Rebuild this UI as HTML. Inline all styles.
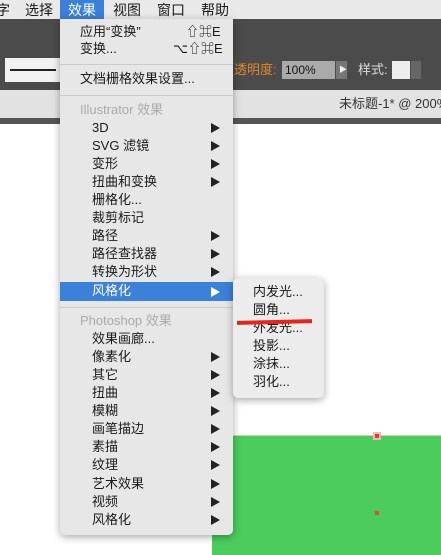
<!DOCTYPE html>
<html><head><meta charset="utf-8"><style>
*{margin:0;padding:0;box-sizing:border-box}
body{width:441px;height:555px;overflow:hidden;position:relative;background:#fff;font-family:"Liberation Sans","Noto Sans CJK SC",sans-serif;}
.a{position:absolute}
.t{position:absolute;font-size:13px;color:#1a1a1a;white-space:nowrap;line-height:16px}
.ar{position:absolute;left:211px;width:0;height:0;border-top:5px solid transparent;border-bottom:5px solid transparent;border-left:9px solid #222}
</style></head><body>
<div class="a" style="left:0;top:0;width:441px;height:19px;background:#e9e9e9"></div>
<div class="t" style="left:-4px;top:2px;font-size:14px">字</div>
<div class="t" style="left:25px;top:2px;font-size:14px">选择</div>
<div class="a" style="left:60px;top:0;width:44px;height:19px;background:#3a7fd8"></div>
<div class="t" style="left:68px;top:2px;font-size:14px;color:#fff">效果</div>
<div class="t" style="left:113px;top:2px;font-size:14px">视图</div>
<div class="t" style="left:157px;top:2px;font-size:14px">窗口</div>
<div class="t" style="left:201px;top:2px;font-size:14px">帮助</div>
<div class="a" style="left:0;top:19px;width:441px;height:71px;background:#4b4b4b"></div>
<div class="a" style="left:5px;top:58px;width:55px;height:24px;background:#f2f2f2"></div>
<div class="a" style="left:10px;top:69px;width:46px;height:2px;background:#222"></div>
<div class="t" style="left:234px;top:62px;color:#e0892a;font-size:13px">透明度:</div>
<div class="a" style="left:282px;top:61px;width:53px;height:18px;background:#aaa"></div>
<div class="t" style="left:285px;top:62px;font-size:12px;color:#111">100%</div>
<div class="a" style="left:336px;top:61px;width:11px;height:18px;background:#777"></div>
<div class="t" style="left:339px;top:62px;font-size:8px;color:#eee">▶</div>
<div class="t" style="left:358px;top:62px;color:#ddd">样式:</div>
<div class="a" style="left:392px;top:61px;width:18px;height:18px;background:#eee"></div>
<div class="a" style="left:411px;top:61px;width:10px;height:18px;background:#666"></div>
<div class="a" style="left:0;top:90px;width:441px;height:28px;background:#e2e2e2"></div>
<div class="t" style="left:339px;top:96px;color:#333">未标题-1* @ 200%</div>
<div class="a" style="left:0;top:118px;width:441px;height:6px;background:#555"></div>
<div class="a" style="left:212px;top:436px;width:229px;height:119px;background:#4bcc5d"></div>
<div class="a" style="left:212px;top:435px;width:229px;height:1px;background:#e9c9a0"></div>
<div class="a" style="left:373px;top:432px;width:8px;height:8px;background:#f1b9b0"></div>
<div class="a" style="left:375px;top:434px;width:4px;height:4px;background:#e33"></div>
<div class="a" style="left:375px;top:511px;width:4px;height:4px;background:#e04a3a"></div>

<div class="a" style="left:60px;top:19px;width:173px;height:516px;background:#e7e7e7;border-radius:0 0 5px 5px;box-shadow:0 2px 8px rgba(0,0,0,.35)"></div>
<div class="t" style="left:80px;top:24px">应用“变换”</div><div class="t" style="left:186px;top:24px">⇧⌘E</div>
<div class="t" style="left:80px;top:41px">变换...</div><div class="t" style="left:173px;top:41px">⌥⇧⌘E</div>
<div class="a" style="left:60px;top:64px;width:173px;height:1px;background:#ccc"></div>
<div class="t" style="left:80px;top:71px">文档栅格效果设置...</div>
<div class="a" style="left:60px;top:95px;width:173px;height:1px;background:#ccc"></div>
<div class="t" style="left:80px;top:102px;color:#aaa">Illustrator 效果</div>
<div class="t" style="left:92px;top:120px">3D</div><div class="ar" style="top:123px"></div>
<div class="t" style="left:92px;top:138px">SVG 滤镜</div><div class="ar" style="top:141px"></div>
<div class="t" style="left:92px;top:156px">变形</div><div class="ar" style="top:159px"></div>
<div class="t" style="left:92px;top:174px">扭曲和变换</div><div class="ar" style="top:177px"></div>
<div class="t" style="left:92px;top:192px">栅格化...</div>
<div class="t" style="left:92px;top:210px">裁剪标记</div>
<div class="t" style="left:92px;top:228px">路径</div><div class="ar" style="top:231px"></div>
<div class="t" style="left:92px;top:246px">路径查找器</div><div class="ar" style="top:249px"></div>
<div class="t" style="left:92px;top:264px">转换为形状</div><div class="ar" style="top:267px"></div>
<div class="a" style="left:60px;top:282px;width:173px;height:19px;background:#3b80d9"></div>
<div class="t" style="left:92px;top:283px;color:#fff">风格化</div><div class="ar" style="top:287px;border-left-color:#fff"></div>
<div class="a" style="left:60px;top:307px;width:173px;height:1px;background:#ccc"></div>
<div class="t" style="left:80px;top:313px;color:#aaa">Photoshop 效果</div>
<div class="t" style="left:92px;top:331px">效果画廊...</div>
<div class="t" style="left:92px;top:349px">像素化</div><div class="ar" style="top:352px"></div>
<div class="t" style="left:92px;top:367px">其它</div><div class="ar" style="top:370px"></div>
<div class="t" style="left:92px;top:385px">扭曲</div><div class="ar" style="top:388px"></div>
<div class="t" style="left:92px;top:403px">模糊</div><div class="ar" style="top:406px"></div>
<div class="t" style="left:92px;top:421px">画笔描边</div><div class="ar" style="top:424px"></div>
<div class="t" style="left:92px;top:439px">素描</div><div class="ar" style="top:442px"></div>
<div class="t" style="left:92px;top:457px">纹理</div><div class="ar" style="top:460px"></div>
<div class="t" style="left:92px;top:476px">艺术效果</div><div class="ar" style="top:479px"></div>
<div class="t" style="left:92px;top:494px">视频</div><div class="ar" style="top:497px"></div>
<div class="t" style="left:92px;top:512px">风格化</div><div class="ar" style="top:515px"></div>

<div class="a" style="left:233px;top:278px;width:91px;height:120px;background:#ececec;border-radius:5px;box-shadow:0 2px 8px rgba(0,0,0,.35)"></div>
<div class="t" style="left:253px;top:284px">内发光...</div>
<div class="t" style="left:253px;top:302px">圆角...</div>
<div class="t" style="left:253px;top:320px">外发光...</div>
<div class="t" style="left:253px;top:338px">投影...</div>
<div class="t" style="left:253px;top:356px">涂抹...</div>
<div class="t" style="left:253px;top:374px">羽化...</div>
<div class="a" style="left:237px;top:320px;width:75px;height:4px;background:#e8231a;transform:rotate(-1.3deg)"></div>
</body></html>
